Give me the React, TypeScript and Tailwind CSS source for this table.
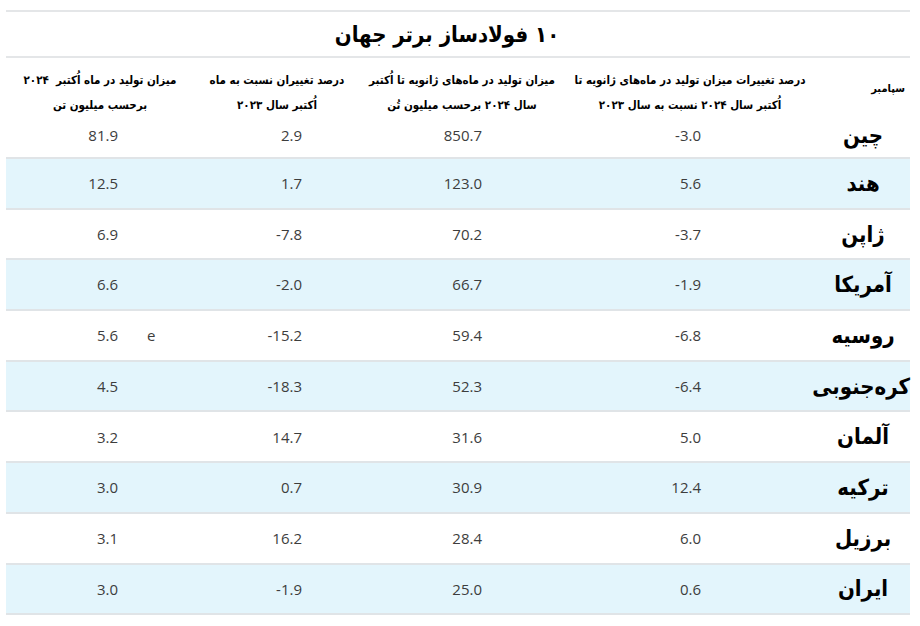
import React from "react";

type Row = {
  country: string;
  change: string;
  total: string;
  monthChange: string;
  month: string;
  note?: string;
};

const rows: Row[] = [
  { country: "چین", change: "-3.0", total: "850.7", monthChange: "2.9", month: "81.9" },
  { country: "هند", change: "5.6", total: "123.0", monthChange: "1.7", month: "12.5" },
  { country: "ژاپن", change: "-3.7", total: "70.2", monthChange: "-7.8", month: "6.9" },
  { country: "آمریکا", change: "-1.9", total: "66.7", monthChange: "-2.0", month: "6.6" },
  { country: "روسیه", change: "-6.8", total: "59.4", monthChange: "-15.2", month: "5.6", note: "e" },
  { country: "کره‌جنوبی", change: "-6.4", total: "52.3", monthChange: "-18.3", month: "4.5" },
  { country: "آلمان", change: "5.0", total: "31.6", monthChange: "14.7", month: "3.2" },
  { country: "ترکیه", change: "12.4", total: "30.9", monthChange: "0.7", month: "3.0" },
  { country: "برزیل", change: "6.0", total: "28.4", monthChange: "16.2", month: "3.1" },
  { country: "ایران", change: "0.6", total: "25.0", monthChange: "-1.9", month: "3.0" },
];

const fa = "font-['DejaVu_Sans_Condensed','DejaVu_Sans',sans-serif]";
const num = "font-['Open_Sans',sans-serif] text-[15px] text-[#3d3d3d]";

function Num({ value, pad, note }: { value: string; pad: string; note?: string }) {
  return (
    <div className={`text-right ${pad} ${num}`}>
      <span dir="ltr" className="relative inline-block">
        {value}
        {note && <span className="absolute left-full top-0 ml-[29px]">{note}</span>}
      </span>
    </div>
  );
}

function Cells({ r }: { r: Row }) {
  return (
    <>
      <div className={`text-center text-[22px] font-bold text-black whitespace-nowrap ${fa}`}>
        {r.country}
      </div>
      <Num value={r.change} pad="pr-[115px]" />
      <Num value={r.total} pad="pr-[82px]" />
      <Num value={r.monthChange} pad="pr-[58px]" />
      <Num value={r.month} pad="pr-[76px]" note={r.note} />
    </>
  );
}

export default function App() {
  return (
    <div className="w-[920px] h-[626px] bg-white pt-[10px]">
      <div dir="rtl" className="ml-[6px] w-[904px]">
        <div className="border-t-2 border-b-2 border-[#e4e6e8] h-[48px] flex items-center justify-center pr-[22px]">
          <h1 className={`text-[22px] font-bold text-black ${fa}`}>۱۰ فولادساز برتر جهان</h1>
        </div>

        <div className="grid grid-cols-[94px_252px_204px_166px_188px] h-[55px] text-[11.5px] font-bold text-black leading-[25px]">
          <div className={`pt-[18px] text-right pr-[5px] text-[11px] whitespace-nowrap ${fa}`}>سپامبر</div>
          <div className={`pt-[10px] text-center whitespace-nowrap ${fa}`}>
            درصد تغییرات میزان تولید در ماه‌های ژانویه تا
            <br />
            اُکتبر سال ۲۰۲۴ نسبت به سال ۲۰۲۳
          </div>
          <div className={`pt-[10px] text-center whitespace-nowrap ${fa}`}>
            میزان تولید در ماه‌های ژانویه تا اُکتبر
            <br />
            سال ۲۰۲۴ برحسب میلیون تُن
          </div>
          <div className={`pt-[10px] text-center whitespace-nowrap ${fa}`}>
            درصد تغییران نسبت به ماه
            <br />
            اُکتبر سال ۲۰۲۳
          </div>
          <div className={`pt-[10px] text-center whitespace-nowrap tracking-[0.4px] ${fa}`}>
            میزان تولید در ماه اُکتبر&nbsp; ۲۰۲۴
            <br />
            برحسب میلیون تن
          </div>
        </div>

        {rows.map((r, i) => (
          <div
            key={r.country}
            className={`grid grid-cols-[94px_252px_204px_166px_188px] items-center border-b-2 border-[#e0e4e7] ${
              i === 0 ? "h-[46px]" : "h-[50.7px]"
            } ${i % 2 === 1 ? "bg-[#e3f5fc]" : "bg-white"}`}
          >
            <Cells r={r} />
          </div>
        ))}
      </div>
    </div>
  );
}
